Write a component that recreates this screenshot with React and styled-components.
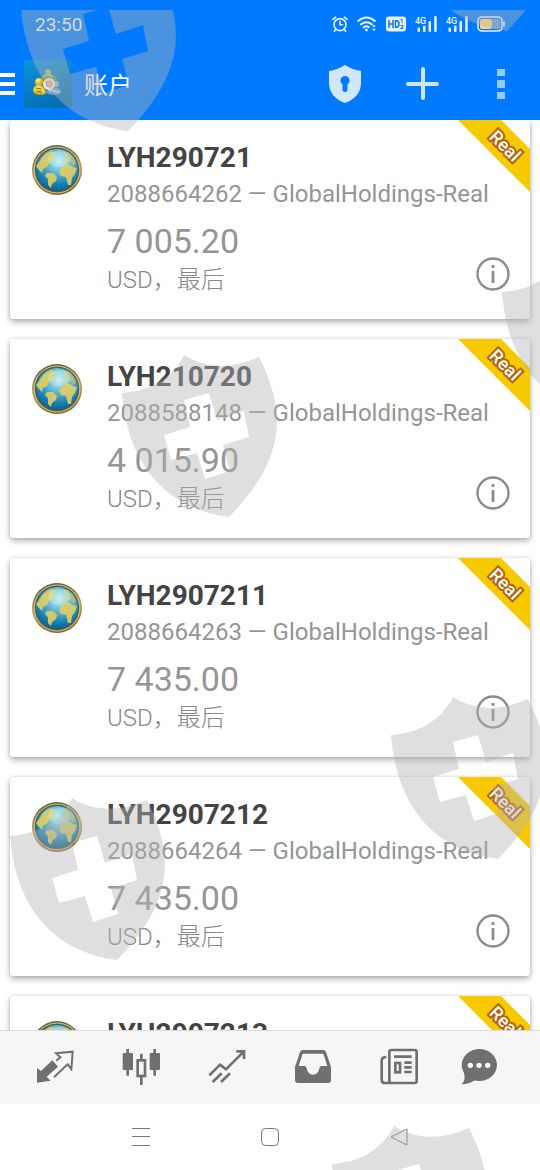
import React from 'react'
import styled, { createGlobalStyle } from 'styled-components'

const GlobalStyle = createGlobalStyle`
  * {
    box-sizing: border-box;
  }

  body {
    margin: 0;
    background: #fff;
    font-family: Roboto, 'Noto Sans CJK SC', sans-serif;
  }

  button {
    display: flex;
    align-items: center;
    justify-content: center;
    padding: 0;
    border: 0;
    background: none;
    color: inherit;
    font: inherit;
    cursor: pointer;
  }
`

const Screen = styled.div`
  position: relative;
  display: flex;
  flex-direction: column;
  height: 100vh;
  overflow: hidden;
`

const Header = styled.header`
  flex: none;
  background: #007aff;
  color: #fff;
`

const StatusBar = styled.div`
  display: flex;
  align-items: center;
  justify-content: space-between;
  height: 48px;
  padding: 0 35px;
  color: #e6f2ff;
  font-size: 19px;
`

const StatusIcons = styled.div`
  display: flex;
  align-items: center;
  gap: 9px;
`

const Toolbar = styled.div`
  display: flex;
  align-items: center;
  height: 72px;
`

const MenuButton = styled.button`
  width: 24px;
  height: 48px;

  && {
    justify-content: flex-start;
  }
`

const Title = styled.h1`
  flex: 1;
  margin: 0 0 0 12px;
  padding-top: 4px;
  font-size: 24px;
  font-weight: 400;
  line-height: 36px;
`

const ToolButton = styled.button`
  width: 78px;
  height: 72px;
`

const AccountList = styled.main`
  display: flex;
  flex: 1;
  flex-direction: column;
  gap: 20px;
  min-height: 0;
  padding: 0 10px;
  overflow: hidden;
`

const Card = styled.article`
  position: relative;
  display: flex;
  flex: none;
  gap: 24px;
  height: 199px;
  padding: 20px 20px 0 21px;
  border-radius: 3px;
  background: #fff;
  box-shadow: 0 3px 6px rgba(0, 0, 0, 0.3), 0 0 3px rgba(0, 0, 0, 0.14);
`

const AccountIcon = styled.div`
  padding-top: 4px;
`

const Details = styled.div`
  flex: 1;
  color: #959595;
`

const Name = styled.h2`
  margin: 0;
  color: #444;
  font-size: 28px;
  font-weight: 700;
  line-height: 36px;
`

const Server = styled.div`
  font-size: 24px;
  line-height: 36px;
  white-space: nowrap;
`

const Summary = styled.div`
  display: flex;
  align-items: flex-end;
  justify-content: space-between;
  margin-top: 8px;
`

const Balance = styled.div`
  font-size: 34px;
  line-height: 42px;
`

const Currency = styled.div`
  color: #888;
  font-size: 24px;
  font-weight: 300;
  line-height: 36px;
`

const InfoButton = styled.button`
  margin-bottom: 7px;
`

const Ribbon = styled.div`
  position: absolute;
  top: 0;
  right: 0;
  width: 72px;
  height: 72px;
  background: #f7ca00;
  clip-path: polygon(0 0, 43px 0, 100% 29px, 100% 100%);

  span {
    position: absolute;
    top: 14px;
    left: 22px;
    width: 50px;
    color: #fff;
    font-size: 18px;
    font-weight: 500;
    line-height: 24px;
    text-align: center;
    transform: rotate(45deg);
    -webkit-text-stroke: 4px #b5620c;
    paint-order: stroke fill;
  }
`

const TabBar = styled.nav`
  display: flex;
  flex: none;
  height: 74px;
  padding: 0 12px 2px;
  border-top: 1px solid #dcdcdc;
  background: #f6f6f6;
  color: #707070;
`

const Tab = styled.button`
  flex: 1;
`

const SystemBar = styled.nav`
  display: flex;
  flex: none;
  justify-content: center;
  height: 66px;
  background: #fff;
  color: #777;
`

const SystemButton = styled.button`
  width: 129px;
`

const Watermarks = styled.div`
  position: absolute;
  inset: 10px 0 0;
  overflow: hidden;
  pointer-events: none;
`

const Mark = styled.svg`
  position: absolute;
  top: ${({ $y }) => $y}px;
  left: ${({ $x }) => $x}px;
  width: 160px;
  height: 164px;
  fill: rgba(178, 178, 178, 0.42);
`

const AlarmIcon = () => (
  <svg width="16" height="16" viewBox="0 0 16 16" fill="none" stroke="currentColor" strokeWidth="1.6" strokeLinecap="round">
    <circle cx="8" cy="8.6" r="6" />
    <path d="M8 5.4v3.4h2.6M1 3.4 3.6 1.2M15 3.4l-2.600-2.200M3.600 13.600l-1.200 1.600M12.400 13.600l1.200 1.600" />
  </svg>
)

const WifiIcon = () => (
  <svg width="20" height="16" viewBox="0 0 20 16" fill="none" stroke="currentColor" strokeWidth="2" strokeLinecap="round">
    <path d="M1.200 5Q9.500-2 17.800 5M4 8.400Q9.500 4 15 8.400M6.800 11.400Q9.500 9.400 12 11.200" />
    <circle cx="9.500" cy="14" r="1.400" fill="currentColor" stroke="none" />
    <path d="m15.200 10.800 1.800-2.200 1.800 2.200zM15.200 12.800l1.800 2.200 1.800-2.200z" fill="currentColor" stroke="none" />
  </svg>
)

const HdIcon = () => (
  <svg width="20" height="16" viewBox="0 0 20 16">
    <rect y="0.5" width="20" height="15" rx="3" fill="currentColor" />
    <g fill="none" stroke="#1874d8" strokeWidth="1.500">
      <path d="M3 4v8M7 4v8M3 8h4M9.500 4.700v6.600h1q2.500 0 2.500-3.300t-2.500-3.300z" />
      <path d="M14.500 3.500h1.500v3.500M14.500 9.500h2.500v1.500l-2.500 1.500h3" strokeWidth="1" />
    </g>
  </svg>
)

const SignalIcon = () => (
  <svg width="22" height="16" viewBox="0 0 22 16" fill="currentColor">
    <text x="0" y="8" fontFamily="Roboto" fontSize="9" fontWeight="500">4G</text>
    <rect x="2.500" y="11.500" width="2.500" height="4.500" rx="1" />
    <rect x="8" y="9.500" width="2.500" height="6.500" rx="1" />
    <rect x="13.500" y="5" width="2.500" height="11" rx="1" />
    <rect x="19.200" y="0" width="2.500" height="16" rx="1" />
  </svg>
)

const BatteryIcon = () => (
  <svg width="28" height="16" viewBox="0 0 28 16">
    <rect x="1" y="1" width="24" height="14" rx="4" fill="none" stroke="currentColor" strokeWidth="1.600" />
    <rect x="3" y="3" width="12" height="10" rx="2" fill="#ffd27a" />
    <rect x="15" y="3" width="8" height="10" rx="2" fill="#5b9ce6" />
    <path d="M27 5.500v5" stroke="currentColor" strokeWidth="1.600" />
  </svg>
)

const MenuIcon = () => (
  <svg width="15" height="22" viewBox="0 0 15 22" fill="currentColor">
    <path d="M0 0h15v4H0zM0 9h15v4H0zM0 18h15v4H0z" />
  </svg>
)

const AppLogo = () => (
  <svg width="48" height="48" viewBox="0 0 48 48">
    <defs>
      <linearGradient id="logo-bg" x1="0" y1="0" x2="0.3" y2="1">
        <stop offset="0" stopColor="#0a96e0" />
        <stop offset="1" stopColor="#0670b4" />
      </linearGradient>
      <radialGradient id="logo-gold" cx="0.4" cy="0.3" r="0.7">
        <stop offset="0" stopColor="#fff07a" />
        <stop offset="1" stopColor="#c99708" />
      </radialGradient>
    </defs>
    <rect width="48" height="48" rx="2" fill="url(#logo-bg)" />
    <path d="M16 21q1-7 6-8h4q6 1 8 9l-5 2H18z" fill="#5f9a62" />
    <circle cx="24" cy="12" r="3" fill="#9dbd83" />
    <path d="M19 17q5-4 10 0" fill="none" stroke="#b9cf9c" strokeWidth="1.500" />
    <circle cx="15" cy="22" r="4" fill="url(#logo-gold)" />
    <ellipse cx="15" cy="30" rx="6" ry="5" fill="url(#logo-gold)" />
    <circle cx="19" cy="32" r="3" fill="url(#logo-gold)" />
    <path d="M12 28l5 1M13 31l5 1" stroke="#8a6a08" />
    <path d="M22 33q1-5 7-6l5 1 3 4-1 2q-8 2-14-1z" fill="#6da3c9" />
    <circle cx="32" cy="24" r="3" fill="#93b7c4" />
    <path d="M25 31l4-1 3 2 4-1" fill="none" stroke="#c5dde9" strokeWidth="1.500" />
    <circle cx="25" cy="24" r="6" fill="#f3e6df" />
    <circle cx="25" cy="24" r="3" fill="#e3b9ab" stroke="#c98f84" />
  </svg>
)

const ShieldIcon = () => (
  <svg width="34" height="38" viewBox="0 0 34 38">
    <path
      fillRule="evenodd"
      fill="#d2e7ff"
      d="M17 0Q25 5 33 6V18C33 28 26 35 17 38 8 35 1 28 1 18V6Q9 5 17 0ZM17 11a4.500 4.500 0 0 0-2.500 8.200V25q0 2 2.500 2t2.500-2v-5.800A4.500 4.500 0 0 0 17 11Z"
    />
  </svg>
)

const PlusIcon = () => (
  <svg width="34" height="34" viewBox="0 0 34 34" stroke="#cfe5ff" strokeWidth="4" strokeLinecap="round">
    <path d="M17 2v29M2 17h29" />
  </svg>
)

const MoreIcon = () => (
  <svg width="8" height="30" viewBox="0 0 8 30" fill="#99caff">
    <path d="M0 0h8v7H0zM0 11h8v8H0zM0 23h8v7H0z" />
  </svg>
)

const GlobeIcon = () => (
  <svg width="52" height="52" viewBox="0 0 52 52">
    <defs>
      <radialGradient id="ocean" cx="0.55" cy="0.28" r="0.75">
        <stop offset="0" stopColor="#c4eef2" />
        <stop offset="0.4" stopColor="#5fb6cf" />
        <stop offset="0.75" stopColor="#1580b5" />
        <stop offset="1" stopColor="#0d5a86" />
      </radialGradient>
      <linearGradient id="rim" x1="0.4" y1="0" x2="0.6" y2="1">
        <stop offset="0" stopColor="#59603c" />
        <stop offset="0.5" stopColor="#b59a5a" />
        <stop offset="1" stopColor="#8a5c26" />
      </linearGradient>
    </defs>
    <circle cx="26" cy="26" r="25" fill="url(#rim)" />
    <circle cx="26" cy="26" r="23" fill="none" stroke="#d9c48a" />
    <circle cx="26" cy="26" r="22" fill="#3c5f54" />
    <circle cx="26" cy="26" r="21" fill="url(#ocean)" />
    <g fill="#e2cf63" opacity="0.9">
      <path d="M8 18q4-8 12-11l5 2-3 4 2 2-5 3-3 5-4 2-1 4-4-4-2-3z" />
      <path d="M16 29l6 0 4 4-1 4-4 3-1 4-3-3 0-6-3-3z" />
      <path d="M32 8l5 0q7 5 8 12l-3 2-3-4-6 1-2-3 3-3z" opacity="0.6" />
      <path d="M31 23l6-3 5 3 4 1-2 6-3 4-1 7-3 0-2-8-5-1-2-4z" />
    </g>
    <ellipse cx="28" cy="15" rx="11" ry="8" fill="#d8f7f5" opacity="0.3" />
  </svg>
)

const InfoIcon = () => (
  <svg width="34" height="34" viewBox="0 0 34 34">
    <circle cx="17" cy="17" r="15.500" fill="none" stroke="#8c8c8c" strokeWidth="2.400" />
    <path d="M17 14v12M17 8v3" stroke="#8c8c8c" strokeWidth="2.800" />
  </svg>
)

const QuotesIcon = () => (
  <svg width="40" height="40" viewBox="0 0 120 120" fill="none" stroke="currentColor" strokeWidth="6">
    <path d="M6 63 18 72 52 40 69 59 35 89 47 101 6 107z" fill="currentColor" stroke="none" />
    <path d="M64 41 76 31 63 19 113 14 109 66 98 52 57 91" />
  </svg>
)

const ChartIcon = () => (
  <svg width="40" height="40" viewBox="0 0 120 120" fill="none" stroke="currentColor" strokeWidth="8">
    <rect x="5" y="18" width="31" height="51" rx="3" fill="currentColor" stroke="none" />
    <rect x="86" y="18" width="31" height="51" rx="3" fill="currentColor" stroke="none" />
    <rect x="50" y="40" width="22" height="47" />
    <path d="M20 6v80M101 6v80M61 20v18M61 88v26" />
  </svg>
)

const TradeIcon = () => (
  <svg width="40" height="40" viewBox="0 0 120 120" fill="none" stroke="currentColor" strokeWidth="8">
    <path d="M7 85 39 53 57 67 110 14M88 13h23v23M17 105l27-26M42 105l27-26" />
  </svg>
)

const InboxIcon = () => (
  <svg width="40" height="40" viewBox="0 0 120 120" fill="currentColor">
    <path
      fillRule="evenodd"
      d="M6 60 21 15Q23 9 30 9H90Q97 9 99 15L114 60V99Q114 108 105 108H15Q6 108 6 99ZM17 57H36Q40 60 41 64 44 83 60 83 76 83 79 64 80 60 84 57H103L91 20H29Z"
    />
  </svg>
)

const NewsIcon = () => (
  <svg width="40" height="40" viewBox="0 0 120 120" fill="none" stroke="currentColor" strokeWidth="8">
    <rect x="31" y="9" width="82" height="99" rx="6" />
    <path d="M22 30Q8 30 8 42V98Q8 108 18 108H36M45 29h53M76 47h22M76 61h22M76 75h22" />
    <rect x="49" y="48" width="14" height="28" />
  </svg>
)

const ChatIcon = () => (
  <svg width="52" height="40" viewBox="0 0 156 120" fill="currentColor">
    <ellipse cx="61" cy="54" rx="53" ry="48" />
    <path d="M14 74Q22 96 8 112 34 110 50 98z" />
    <g fill="#fff">
      <circle cx="34" cy="55" r="8" />
      <circle cx="60" cy="55" r="8" />
      <circle cx="86" cy="55" r="8" />
    </g>
  </svg>
)

const RecentsIcon = () => (
  <svg width="18" height="18" viewBox="0 0 18 18" stroke="currentColor">
    <path d="M0 .5h18M0 8.500h18M0 17.500h18" />
  </svg>
)

const HomeIcon = () => (
  <svg width="18" height="18" viewBox="0 0 18 18" fill="none" stroke="currentColor">
    <rect x="0.500" y="0.500" width="17" height="17" rx="4" />
  </svg>
)

const BackIcon = () => (
  <svg width="18" height="18" viewBox="0 0 18 18" fill="none" stroke="currentColor" strokeLinejoin="round">
    <path d="M17 1v16L1 9z" />
  </svg>
)

const accounts = [
  { name: 'LYH290721', login: '2088664262', balance: '7 005.20' },
  { name: 'LYH210720', login: '2088588148', balance: '4 015.90' },
  { name: 'LYH2907211', login: '2088664263', balance: '7 435.00' },
  { name: 'LYH2907212', login: '2088664264', balance: '7 435.00' },
  { name: 'LYH2907213', login: '2088664265', balance: '7 435.00' }
]

const tabs = [
  { label: '行情', Icon: QuotesIcon },
  { label: '图表', Icon: ChartIcon },
  { label: '交易', Icon: TradeIcon },
  { label: '历史', Icon: InboxIcon },
  { label: '新闻', Icon: NewsIcon },
  { label: '聊天', Icon: ChatIcon }
]

const marks = [
  { x: 21, y: -41 },
  { x: 400, y: -141 },
  { x: 502, y: 244 },
  { x: 122, y: 345 },
  { x: 391, y: 687 },
  { x: 10, y: 788 },
  { x: 332, y: 1116 }
]

const Account = ({ name, login, balance }) => {
  return (
    <Card>
      <AccountIcon>
        <GlobeIcon />
      </AccountIcon>
      <Details>
        <Name>{name}</Name>
        <Server>{login} — GlobalHoldings-Real</Server>
        <Summary>
          <div>
            <Balance>{balance}</Balance>
            <Currency>USD，最后</Currency>
          </div>
          <InfoButton aria-label="信息">
            <InfoIcon />
          </InfoButton>
        </Summary>
      </Details>
      <Ribbon>
        <span>Real</span>
      </Ribbon>
    </Card>
  )
}

const App = () => {
  return (
    <Screen>
      <GlobalStyle />
      <Header>
        <StatusBar>
          <span>23:50</span>
          <StatusIcons>
            <AlarmIcon />
            <WifiIcon />
            <HdIcon />
            <SignalIcon />
            <SignalIcon />
            <BatteryIcon />
          </StatusIcons>
        </StatusBar>
        <Toolbar>
          <MenuButton aria-label="菜单">
            <MenuIcon />
          </MenuButton>
          <AppLogo />
          <Title>账户</Title>
          <ToolButton aria-label="安全">
            <ShieldIcon />
          </ToolButton>
          <ToolButton aria-label="添加">
            <PlusIcon />
          </ToolButton>
          <ToolButton aria-label="更多">
            <MoreIcon />
          </ToolButton>
        </Toolbar>
      </Header>
      <AccountList>
        {accounts.map(account => (
          <Account key={account.login} {...account} />
        ))}
      </AccountList>
      <TabBar>
        {tabs.map(({ label, Icon }) => (
          <Tab key={label} aria-label={label}>
            <Icon />
          </Tab>
        ))}
      </TabBar>
      <SystemBar>
        <SystemButton aria-label="最近">
          <RecentsIcon />
        </SystemButton>
        <SystemButton aria-label="主页">
          <HomeIcon />
        </SystemButton>
        <SystemButton aria-label="返回">
          <BackIcon />
        </SystemButton>
      </SystemBar>
      <Watermarks>
        {marks.map(({ x, y }) => (
          <Mark key={`${x}-${y}`} $x={x} $y={y} viewBox="0 0 160 164">
            <path
              fillRule="evenodd"
              d="M0 38C32 36 52 20 62 0 84 14 110 14 137 2 162 52 168 100 107 162 30 152 4 92 0 38ZM62 45 68 72 42 80 49 105 75 98 83 124 108 116 101 90 127 82 122 56 95 65 87 38Z"
            />
          </Mark>
        ))}
      </Watermarks>
    </Screen>
  )
}

export default App
